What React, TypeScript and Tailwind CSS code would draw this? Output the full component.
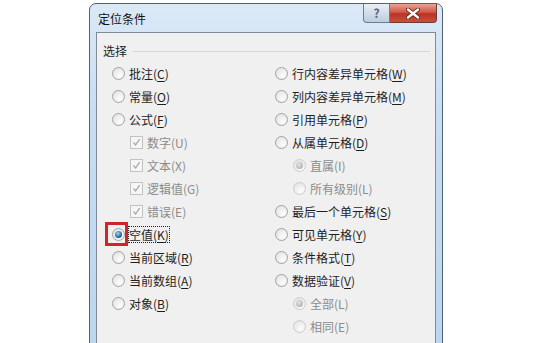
import type { ReactNode } from "react";

type Item = {
  label: string;
  key?: string;
  kind: "radio" | "check";
  checked?: boolean;
  disabled?: boolean;
  indent?: boolean;
  focus?: boolean;
  marked?: boolean;
};

const left: Item[] = [
  { label: "批注", key: "C", kind: "radio" },
  { label: "常量", key: "O", kind: "radio" },
  { label: "公式", key: "F", kind: "radio" },
  { label: "数字", key: "U", kind: "check", checked: true, disabled: true, indent: true },
  { label: "文本", key: "X", kind: "check", checked: true, disabled: true, indent: true },
  { label: "逻辑值", key: "G", kind: "check", checked: true, disabled: true, indent: true },
  { label: "错误", key: "E", kind: "check", checked: true, disabled: true, indent: true },
  { label: "空值", key: "K", kind: "radio", checked: true, focus: true, marked: true },
  { label: "当前区域", key: "R", kind: "radio" },
  { label: "当前数组", key: "A", kind: "radio" },
  { label: "对象", key: "B", kind: "radio" },
];

const right: Item[] = [
  { label: "行内容差异单元格", key: "W", kind: "radio" },
  { label: "列内容差异单元格", key: "M", kind: "radio" },
  { label: "引用单元格", key: "P", kind: "radio" },
  { label: "从属单元格", key: "D", kind: "radio" },
  { label: "直属", key: "I", kind: "radio", checked: true, disabled: true, indent: true },
  { label: "所有级别", key: "L", kind: "radio", disabled: true, indent: true },
  { label: "最后一个单元格", key: "S", kind: "radio" },
  { label: "可见单元格", key: "Y", kind: "radio" },
  { label: "条件格式", key: "T", kind: "radio" },
  { label: "数据验证", key: "V", kind: "radio" },
  { label: "全部", key: "L", kind: "radio", checked: true, disabled: true, indent: true },
  { label: "相同", key: "E", kind: "radio", disabled: true, indent: true },
];

function Radio({ checked, disabled }: { checked?: boolean; disabled?: boolean }) {
  return (
    <span
      className={`flex h-[13px] w-[13px] shrink-0 items-center justify-center rounded-full border bg-[radial-gradient(circle_at_65%_70%,#fdfdfd,#dedede)] ${
        disabled ? "border-[#cdcdcd]" : "border-[#a2a2a2]"
      }`}
    >
      {checked && (
        <span
          className={`h-[7px] w-[7px] rounded-full ${
            disabled
              ? "bg-[radial-gradient(circle_at_40%_35%,#e4e4e4,#a2a2a2)]"
              : "bg-[radial-gradient(circle_at_40%_35%,#9ad6f2,#23618c_65%,#153f5e)]"
          }`}
        />
      )}
    </span>
  );
}

function Check() {
  return (
    <span className="flex h-[13px] w-[13px] shrink-0 items-center justify-center border border-[#c2c2c2] bg-[#f6f6f6]">
      <svg width="9" height="9" viewBox="0 0 9 9">
        <path d="M1.5 4.5 L3.6 7 L7.6 1.2" fill="none" stroke="#a8a8a8" strokeWidth="1.3" />
      </svg>
    </span>
  );
}

function Row({ item }: { item: Item }) {
  const text: ReactNode = (
    <>
      {item.label}(
      {item.disabled ? item.key : <u className="underline-offset-[2px]">{item.key}</u>})
    </>
  );
  return (
    <div className={`relative flex h-[23px] items-center ${item.indent ? "pl-[18px]" : ""}`}>
      {item.kind === "radio" ? <Radio checked={item.checked} disabled={item.disabled} /> : <Check />}
      {item.marked && (
        <span className="absolute left-[-7px] top-[-1px] h-[24px] w-[23px] border-[3px] border-[#d0232b]" />
      )}
      <span
        className={`whitespace-nowrap leading-[15px] ${item.disabled ? "text-[#8c8c8c]" : "text-[#1e1e1e]"} ${
          item.focus ? "ml-[3px] border border-dotted border-[#222]" : "ml-[4px]"
        }`}
      >
        {text}
      </span>
    </div>
  );
}

export default function App() {
  return (
    <div
      className="h-[343px] w-[558px] overflow-hidden bg-white text-[12px]"
      style={{ fontFamily: '"Noto Sans CJK SC", "Liberation Sans", sans-serif' }}
    >
      <div className="ml-[89px] mt-[3px] flex h-[370px] w-[354px] flex-col rounded-t-[7px] border border-[#4f6277] bg-[linear-gradient(180deg,#dbe9f7,#c8ddf2_30%,#bcd5ed)]">
        {/* title bar */}
        <div className="flex h-[28px] items-start justify-between pl-[8px] pr-[5px]">
          <span className="mt-[7px] text-[12px] leading-[16px] text-[#111]">定位条件</span>
          <div className="flex">
            <div className="flex h-[19px] w-[27px] items-center justify-center rounded-bl-[4px] border border-t-0 border-[#6c7e93] bg-[linear-gradient(180deg,#e9eff6,#d2dde9_50%,#bccddf)] text-[12px] font-bold leading-none text-[#56657a]">
              ?
            </div>
            <div className="flex h-[19px] w-[47px] items-center justify-center rounded-br-[4px] border border-l-0 border-t-0 border-[#6b3b36] bg-[linear-gradient(180deg,#e8a495,#d0594a_45%,#bb3322_55%,#c9503c)]">
              <svg width="14" height="11" viewBox="0 0 14 11">
                <path d="M2 1.5 L12 9.5 M12 1.5 L2 9.5" stroke="#5a1d17" strokeWidth="4" strokeLinecap="round" />
                <path d="M2 1.5 L12 9.5 M12 1.5 L2 9.5" stroke="#fff" strokeWidth="2.4" strokeLinecap="round" />
              </svg>
            </div>
          </div>
        </div>

        {/* client area */}
        <div className="ml-[6px] mr-[6px] flex-1 border border-[#7f8b98] bg-[#f0f0f0] pt-[10px]">
          <div className="flex h-[16px] items-center pl-[6px] pr-[5px]">
            <span className="leading-[16px] text-[#1e1e1e]">选择</span>
            <span className="ml-[6px] h-px flex-1 bg-[#d7d7d7]" />
          </div>
          <div className="mt-[3px] flex pl-[15px]">
            <div className="w-[163px]">
              {left.map((it, i) => (
                <Row key={i} item={it} />
              ))}
            </div>
            <div>
              {right.map((it, i) => (
                <Row key={i} item={it} />
              ))}
            </div>
          </div>
        </div>
      </div>
    </div>
  );
}
